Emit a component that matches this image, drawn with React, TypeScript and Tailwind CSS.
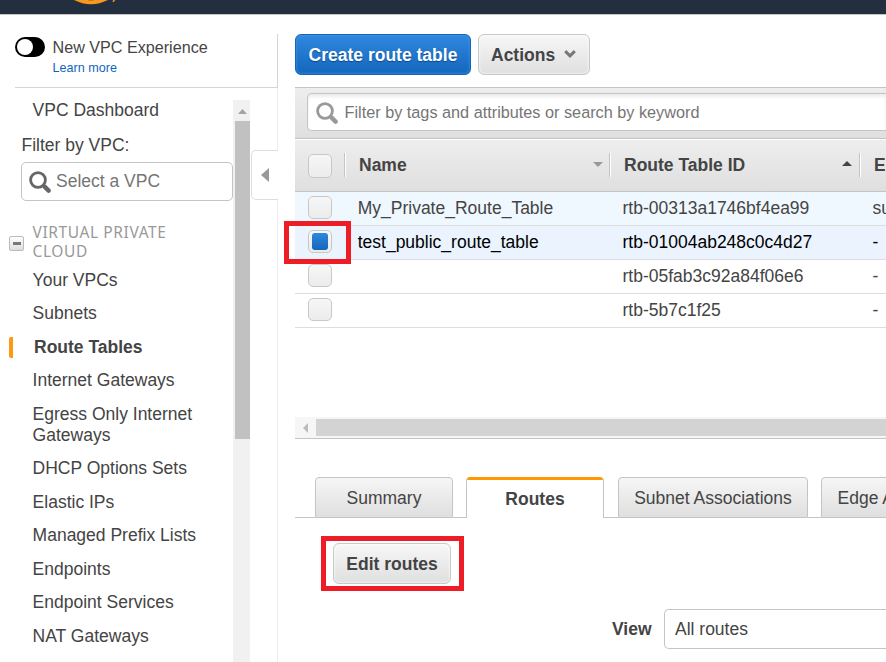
import React from "react";

const rows = [
  { name: "My_Private_Route_Table", id: "rtb-00313a1746bf4ea99", assoc: "subnet-", bg: "bg-[#f0f8ff]", checked: false },
  { name: "test_public_route_table", id: "rtb-01004ab248c0c4d27", assoc: "-", bg: "bg-[#eaf3fe] text-black", checked: true },
  { name: "", id: "rtb-05fab3c92a84f06e6", assoc: "-", bg: "bg-white", checked: false },
  { name: "", id: "rtb-5b7c1f25", assoc: "-", bg: "bg-white", checked: false },
];

const links = [
  "DHCP Options Sets",
  "Elastic IPs",
  "Managed Prefix Lists",
  "Endpoints",
  "Endpoint Services",
  "NAT Gateways",
];

function SearchIcon({ color }: { color: string }) {
  return (
    <svg width="22" height="22" viewBox="0 0 22 22" fill="none" stroke={color} className="mt-px shrink-0">
      <circle cx="9" cy="9" r="7.4" strokeWidth="2.8" />
      <path d="M14.2 14.2L16 16" strokeWidth="2.5" />
      <path d="M15.6 15.6L19.6 19.6" strokeWidth="4.4" strokeLinecap="round" />
    </svg>
  );
}

function Checkbox({ checked, className = "h-[23px]" }: { checked?: boolean; className?: string }) {
  return (
    <span className={"flex w-6 shrink-0 items-center justify-center rounded-[5px] border border-[#c8c8c8] bg-linear-to-b from-[#f6f6f6] to-[#ececec] " + className}>
      {checked && <span className="h-[17px] w-4 rounded-[3px] bg-linear-to-b from-[#2f87dc] to-[#1266bd]" />}
    </span>
  );
}

function NavItem({ children }: { children: React.ReactNode }) {
  return <li className="py-[6.25px] pl-[32.6px] leading-[21px]">{children}</li>;
}

function Divider() {
  return <span className="h-[24px] w-[2px] shrink-0 border-l border-[#c4c4c4] bg-white" />;
}

function Sidebar() {
  return (
    <aside className="relative mt-[19px] flex w-[278px] shrink-0 flex-col">
      <div className="flex h-[53px] border-r border-[#d5d5d5] pl-[15px]">
        <span className="mt-[3px] flex h-5 w-[30px] items-center rounded-full bg-black pl-[2px]">
          <span className="size-4 rounded-full bg-white" />
        </span>
        <div className="pl-[7.5px]">
          <div className="pt-[3px] pb-px text-[16.15px] leading-5">New VPC Experience</div>
          <div className="text-[12.6px] leading-5 text-[#1166bb]">Learn more</div>
        </div>
      </div>
      <div className="ml-[15px] border-t border-[#d5d5d5]" />
      <div className="flex min-h-0 flex-1 border-r border-[#eee] pt-3">
        <div className="w-[233px] shrink-0">
          <div className="pl-[32.6px] leading-[21px]">VPC Dashboard</div>
          <div className="mt-[14px] pl-[21.5px] leading-[21px]">Filter by VPC:</div>
          <div className="mt-[6px] ml-[21px] flex h-[39px] w-[212px] items-center rounded-[5px] border border-[#c4c4c4] pl-[7px] text-[#757575]">
            <SearchIcon color="#666" />
            <span className="pl-[5px]">Select a VPC</span>
          </div>
          <div className="mt-[22px] flex pl-[9px]">
            <span className="mt-[13px] flex size-[15px] items-center justify-center rounded-[2px] border border-[#bbb] bg-linear-to-b from-white to-[#ddd]">
              <span className="h-[3px] w-2 bg-[#777]" />
            </span>
            <span className="pl-[8.5px] font-['Noto_Sans',sans-serif] text-[15.5px] leading-[19px] tracking-[0.6px] text-[#999]">
              VIRTUAL PRIVATE
              <br />
              CLOUD
            </span>
          </div>
          <ul className="mt-[2.6px]">
            <NavItem>Your VPCs</NavItem>
            <NavItem>Subnets</NavItem>
            <li className="flex items-center py-[6.25px] pl-[9px] leading-[21px] font-bold">
              <span className="h-[21px] w-1 rounded-l-[2px] bg-[#ff9914]" />
              <span className="pl-[21px]">Route Tables</span>
            </li>
            <NavItem>Internet Gateways</NavItem>
            <NavItem>
              Egress Only Internet
              <br />
              Gateways
            </NavItem>
            {links.map((l) => (
              <NavItem key={l}>{l}</NavItem>
            ))}
          </ul>
        </div>
        <div className="w-[17px] bg-[#f1f1f1] pl-[2px]">
          <div className="flex h-[21px] items-center justify-center">
            <svg width="9" height="5" viewBox="0 0 9 5" className="mt-[2px]"><path d="M4.5 0L9 5H0z" fill="#a3a3a3" /></svg>
          </div>
          <div className="h-[318px] bg-[#c1c1c1]" />
        </div>
      </div>
      <button className="absolute top-[116px] right-0 flex h-[50px] w-[27px] items-center rounded-l-[5px] border border-r-0 border-[#ddd] bg-white pl-[9px]">
        <svg width="8" height="14" viewBox="0 0 8 14"><path d="M8 0V14L0 7z" fill="#999" /></svg>
      </button>
    </aside>
  );
}

function RouteTable() {
  return (
    <section className="mt-3 border-t border-[#c4c4c4]">
      <div className="flex h-[50px] bg-linear-to-b from-[#eee] to-[#dfdfdf] pt-[5px] pl-3">
        <div className="flex h-[38px] flex-1 items-center rounded-l-[5px] border border-r-0 border-[#c4c4c4] bg-white pl-2 text-[16.25px] text-[#757575] shadow-[inset_0_3px_3px_#eee]">
          <SearchIcon color="#999" />
          <span className="pl-[6.5px]">Filter by tags and attributes or search by keyword</span>
        </div>
      </div>
      <div className="flex h-[54px] items-center border-y border-[#c4c4c4] bg-linear-to-b from-[#eee] to-[#dfdfdf] pl-[13px] font-bold shadow-[inset_0_1px_0_#fff]">
        <Checkbox className="mt-px h-6" />
        <span className="w-3 shrink-0" />
        <Divider />
        <span className="w-[247px] shrink-0 pl-[13px]">Name</span>
        <svg width="10" height="6" viewBox="0 0 10 6" className="shrink-0"><path d="M0 0H10L5 5z" fill="#999" /></svg>
        <span className="w-[6px] shrink-0" />
        <Divider />
        <span className="w-[231px] shrink-0 pl-[13px]">Route Table ID</span>
        <svg width="10" height="5" viewBox="0 0 10 5" className="mb-1 shrink-0"><path d="M5 0L10 5H0z" fill="#444" /></svg>
        <span className="w-[7px] shrink-0" />
        <Divider />
        <span className="w-6 overflow-hidden pl-[13px] whitespace-nowrap">Explicit</span>
      </div>
      {rows.map((r) => (
        <div key={r.id} className={"flex h-[34px] items-center border-b border-[#ddd] pl-[13px] " + r.bg}>
          <Checkbox checked={r.checked} className="mb-[2px] h-[23px]" />
          <span className="w-[265px] shrink-0 pl-[25.7px]">{r.name}</span>
          <span className="w-[276px] shrink-0 pl-[25.5px]">{r.id}</span>
          <span className="-ml-[0.5px] whitespace-nowrap">{r.assoc}</span>
        </div>
      ))}
      <div className="mt-[89px] flex h-[22px] border-b border-[#c4c4c4] bg-[#f6f6f6] pt-[2px] pb-[2px]">
        <span className="flex w-[21px] items-center pl-2">
          <svg width="5" height="10" viewBox="0 0 5 10"><path d="M5 0V10L0 5z" fill="#bbb" /></svg>
        </span>
        <span className="flex-1 bg-[#d3d3d3]" />
      </div>
    </section>
  );
}

const tab = "flex h-[41px] shrink-0 items-center rounded-t-[4px] border border-[#c4c4c4] pt-px whitespace-nowrap ";
const inactive = "bg-linear-to-b from-[#f6f6f6] to-[#dfdfdf]";
const button = "flex h-[41px] items-center rounded-[6px] border pt-px font-bold ";
const grayButton = "border-[#c8c8c8] bg-linear-to-b from-[#f7f7f7] to-[#dfdfdf] shadow-[inset_0_0_3px_#fff]";

function Details() {
  return (
    <section>
      <div className="mt-[38px] flex">
        <span className="w-5 shrink-0 border-b border-[#c4c4c4]" />
        <span className={tab + "w-[138px] justify-center " + inactive}>Summary</span>
        <span className="w-[13px] shrink-0 border-b border-[#c4c4c4]" />
        <span className="relative flex h-[41px] w-[138px] shrink-0 items-center justify-center overflow-hidden rounded-t-[4px] border-x border-[#c4c4c4] font-bold">
          <span className="absolute inset-x-0 top-0 h-[3px] bg-[#ff9900]" />
          <span className="pt-[3px]">Routes</span>
        </span>
        <span className="w-[14px] shrink-0 border-b border-[#c4c4c4]" />
        <span className={tab + "w-[190px] justify-center " + inactive}>Subnet Associations</span>
        <span className="w-[13px] shrink-0 border-b border-[#c4c4c4]" />
        <span className={tab + "w-[176px] pl-[15.5px] " + inactive}>Edge Associations</span>
      </div>
      <div className="mt-[18px] ml-[26px] h-[55px] w-[143px] border-5 border-[#ee1c25] pt-[2px] pl-[7px]">
        <button className={button + "w-[118px] justify-center " + grayButton}>Edit routes</button>
      </div>
      <div className="mt-[18px] flex items-center">
        <span className="w-[369px] shrink-0 pl-[317px] font-bold">View</span>
        <span className="flex h-10 flex-1 items-center rounded-l-[5px] border border-r-0 border-[#c4c4c4] pl-[10px]">All routes</span>
      </div>
    </section>
  );
}

export default function App() {
  return (
    <div className="relative flex h-[662px] w-[886px] flex-col overflow-hidden bg-white font-['Liberation_Sans',Arial,sans-serif] text-[17.5px] leading-[21px] text-[#444]">
      <header className="h-[15px] shrink-0 border-b border-[#c4c4c4] bg-[#232f3e]">
        <svg width="60" height="14" viewBox="0 0 60 14" className="ml-[71px]" fill="none" stroke="#f7981f">
          <path d="M0 -4Q20 8.5 40 -4" strokeWidth="4" />
          <path d="M42 1.8L44 -1" strokeWidth="1.5" />
        </svg>
      </header>
      <div className="flex min-h-0 flex-1">
        <Sidebar />
        <main className="ml-[17px] w-[591px] shrink-0 pt-[19px]">
          <div className="flex gap-[7px]">
            <button className={button + "w-[176px] justify-center border-[#1166bb] bg-linear-to-b from-[#3088de] to-[#1266bd] text-white shadow-[inset_0_0_3px_#4a98e6] text-shadow-[0_1px_1px_#0a4a8a]"}>
              Create route table
            </button>
            <button className={button + "w-[112px] pl-[12px] " + grayButton}>
              Actions
              <svg width="12" height="9" viewBox="0 0 12 9" className="mb-[2px] ml-[9px]"><path d="M1.2 1.2L6 5.8L10.8 1.2" fill="none" stroke="#777" strokeWidth="3" /></svg>
            </button>
          </div>
          <RouteTable />
          <Details />
        </main>
      </div>
      <div className="pointer-events-none absolute top-[221px] left-[284px] h-[43px] w-[67px] border-5 border-[#ee1c25]" />
    </div>
  );
}
